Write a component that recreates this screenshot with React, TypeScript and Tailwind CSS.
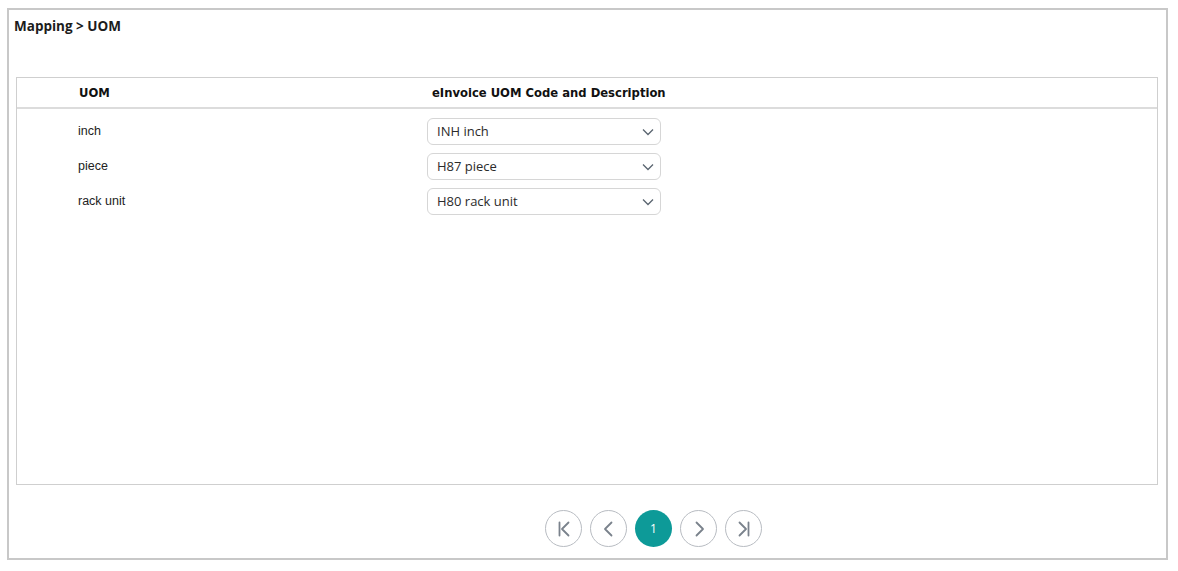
import type { ReactNode } from "react";

const rows = [
  { uom: "inch", code: "INH inch" },
  { uom: "piece", code: "H87 piece" },
  { uom: "rack unit", code: "H80 rack unit" },
];

const font = { fontFamily: '"Segoe UI", "Open Sans", "Liberation Sans", sans-serif' };
const headFont = { fontFamily: '"DejaVu Sans", Tahoma, sans-serif' };
const cellFont = { fontFamily: '"Liberation Sans", Arial, sans-serif' };

function Chevron() {
  return (
    <svg width="12" height="8" viewBox="0 0 12 8" fill="none" stroke="#5a6570" strokeWidth="1.3">
      <path d="M1 1.5 6 6.5 11 1.5" />
    </svg>
  );
}

function PageBtn({ children, active }: { children: ReactNode; active?: boolean }) {
  if (active) {
    return (
      <div className="flex h-[37px] w-[37px] items-center justify-center rounded-full bg-[#0d9a98] text-[12px] text-white">{children}</div>
    );
  }
  return (
    <div className="flex h-[37px] w-[37px] items-center justify-center rounded-full border-[1.5px] border-[#b8bcc2] bg-white">{children}</div>
  );
}

const stroke = { fill: "none", stroke: "#7a828c", strokeWidth: 1.8, strokeLinecap: "round" as const, strokeLinejoin: "round" as const };

export default function App() {
  return (
    <div className="h-[571px] w-[1178px] bg-white pl-[7px] pt-[8px]" style={font}>
      <div className="flex h-[552px] w-[1161px] flex-col border-2 border-[#c8c8c8]">
        <div className="pl-[5px] pt-[7px] text-[13.5px] font-bold leading-[18px] text-[#1c1c1c]">Mapping &gt; UOM</div>
        <div className="ml-[7px] mt-[42px] h-[408px] w-[1142px] border border-[#cfcfcf]">
          <div className="flex h-[31px] items-center border-b-2 border-[#dcdcdc] pt-[3px] text-[11.6px] font-bold text-[#111]" style={headFont}>
            <div className="w-[410px] pl-[62px]">UOM</div>
            <div className="pl-[5px]">eInvoice UOM Code and Description</div>
          </div>
          <div className="pt-[5px]">
            {rows.map((r) => (
              <div key={r.uom} className="flex h-[35px] items-center text-[12.5px] text-[#222]">
                <div className="w-[410px] pl-[61px]" style={cellFont}>{r.uom}</div>
                <div className="flex h-[27px] w-[234px] items-center justify-between rounded-[6px] border border-[#d6d6d6] bg-white pl-[9px] pr-[6px] text-[13px] text-[#2b2b2b]">
                  <span>{r.code}</span>
                  <Chevron />
                </div>
              </div>
            ))}
          </div>
        </div>
        <div className="ml-[536px] mt-[25px] flex gap-[8px]">
          <PageBtn>
            <svg width="18" height="18" viewBox="0 0 18 18" {...stroke}>
              <path d="M4.5 2.5v13M13.5 2.5 7 9l6.5 6.5" />
            </svg>
          </PageBtn>
          <PageBtn>
            <svg width="18" height="18" viewBox="0 0 18 18" {...stroke}>
              <path d="M11.5 2.5 5 9l6.5 6.5" />
            </svg>
          </PageBtn>
          <PageBtn active>1</PageBtn>
          <PageBtn>
            <svg width="18" height="18" viewBox="0 0 18 18" {...stroke}>
              <path d="M6.5 2.5 13 9l-6.5 6.5" />
            </svg>
          </PageBtn>
          <PageBtn>
            <svg width="18" height="18" viewBox="0 0 18 18" {...stroke}>
              <path d="M13.5 2.5v13M4.5 2.5 11 9l-6.5 6.5" />
            </svg>
          </PageBtn>
        </div>
      </div>
    </div>
  );
}
